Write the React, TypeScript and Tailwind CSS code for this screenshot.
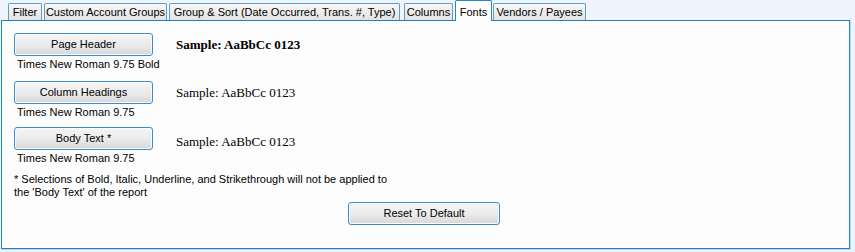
import React from "react";

const ui = { fontFamily: '"Liberation Sans", Arial, sans-serif' };
const serif = { fontFamily: '"Liberation Serif", "Times New Roman", serif' };

const tabs = [
  { label: "Filter", w: "w-[34px]", ml: "ml-[7px]" },
  { label: "Custom Account Groups", w: "w-[123px]", ml: "ml-[2px]" },
  { label: "Group & Sort (Date Occurred, Trans. #, Type)", w: "w-[231px]", ml: "ml-[2px]" },
  { label: "Columns", w: "w-[49px]", ml: "ml-[4px]" },
  { label: "Fonts", w: "w-[37px]", ml: "ml-[2px]", active: true },
  { label: "Vendors / Payees", w: "w-[93px]", ml: "ml-[1px]" },
];

function WinButton({ children, className = "" }: { children: React.ReactNode; className?: string }) {
  return (
    <button
      type="button"
      className={`flex h-[23px] items-center justify-center rounded-[3px] border border-[#3d8ccc] bg-gradient-to-b from-[#f5f5f5] via-[#ececec] to-[#d8d8d8] text-[11px] text-black shadow-[inset_0_0_0_1px_#fbfbfb] ${className}`}
    >
      {children}
    </button>
  );
}

const rows = [
  { button: "Page Header", desc: "Times New Roman 9.75 Bold", bold: true, mt: "" },
  { button: "Column Headings", desc: "Times New Roman 9.75", mt: "mt-[10px]" },
  { button: "Body Text *", desc: "Times New Roman 9.75", mt: "mt-[8px]", shift: true },
];

export default function App() {
  return (
    <div className="h-[252px] w-[855px] bg-[#eef5fd] pl-[1px]" style={ui}>
      <div className="flex h-[20px] items-end">
        {tabs.map((t) =>
          t.active ? (
            <div
              key={t.label}
              className={`relative z-10 -mb-px flex h-[21px] items-start justify-center rounded-t-[2px] border border-b-0 border-[#2b86c8] bg-[#fdfdfd] pt-[3px] text-[11px] text-black ${t.w} ${t.ml}`}
            >
              {t.label}
            </div>
          ) : (
            <div
              key={t.label}
              className={`flex h-[17px] items-center justify-center rounded-t-[2px] border border-b-0 border-[#5f9cc9] bg-gradient-to-b from-[#f7f7f7] to-[#e3e3e3] pt-px text-[11px] whitespace-nowrap text-black ${t.w} ${t.ml}`}
            >
              {t.label}
            </div>
          ),
        )}
      </div>
      <div className="h-[229px] w-[849px] border border-[#2280c6] bg-[#fdfdfd] pl-[12px] pt-[12px] shadow-[1px_1px_0_#b9d7ee]">
        <div className="flex flex-col">
          {rows.map((r) => (
            <div key={r.button} className={`flex items-start ${r.mt}`}>
              <div className="flex w-[139px] flex-col">
                <WinButton className="w-[139px]">{r.button}</WinButton>
                <div className="mt-[2px] pl-[3px] text-[11px] leading-[13px] whitespace-nowrap text-black">{r.desc}</div>
              </div>
              <div
                className={`ml-[23px] text-[13px] leading-[23px] text-black ${r.bold ? "font-bold" : ""} ${r.shift ? "pt-[3px]" : ""}`}
                style={serif}
              >
                Sample: AaBbCc 0123
              </div>
            </div>
          ))}
        </div>
        <div className="mt-[8px] text-[11px] leading-[13px] text-black">
          * Selections of Bold, Italic, Underline, and Strikethrough will not be applied to
          <br />
          the 'Body Text' of the report
        </div>
        <div className="mt-[3px] flex pl-[334px]">
          <WinButton className="w-[152px]">Reset To Default</WinButton>
        </div>
      </div>
    </div>
  );
}
